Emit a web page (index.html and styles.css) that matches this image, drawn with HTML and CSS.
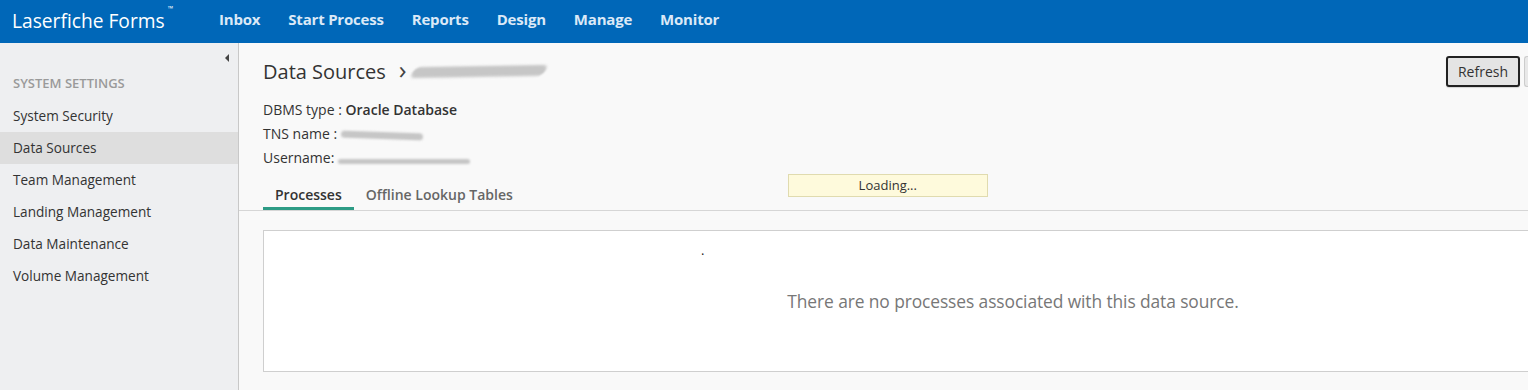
FILE: index.html
```html
<!DOCTYPE html>
<html>
<head>
<meta charset="utf-8">
<link rel="stylesheet" href="styles.css">
</head>
<body>
<header class="topbar">
  <div class="brand">Laserfiche Forms<sup class="tm">™</sup></div>
  <nav class="nav">
    <a>Inbox</a>
    <a>Start Process</a>
    <a>Reports</a>
    <a>Design</a>
    <a>Manage</a>
    <a>Monitor</a>
  </nav>
</header>
<div class="layout">
  <aside class="sidebar">
    <div class="collapse"><span class="tri"></span></div>
    <div class="side-head">SYSTEM SETTINGS</div>
    <ul class="side-list">
      <li>System Security</li>
      <li class="active">Data Sources</li>
      <li>Team Management</li>
      <li>Landing Management</li>
      <li>Data Maintenance</li>
      <li>Volume Management</li>
    </ul>
  </aside>
  <main class="main">
    <div class="head-row">
      <h1 class="title">Data Sources <span class="chev">›</span><span class="redact r-title"></span></h1>
      <div class="btns">
        <button class="btn">Refresh</button>
        <span class="btn-edge"></span>
      </div>
    </div>
    <div class="info">
      <div>DBMS type : <b>Oracle Database</b></div>
      <div>TNS name : <span class="redact r-tns"></span></div>
      <div>Username: <span class="redact r-user"></span></div>
    </div>
    <div class="tabs-row">
      <div class="tabs">
        <span class="tab active">Processes</span>
        <span class="tab">Offline Lookup Tables</span>
      </div>
      <div class="loading">Loading...</div>
    </div>
    <div class="panel">
      <span class="dot">.</span>
      <p class="empty">There are no processes associated with this data source.</p>
    </div>
  </main>
</div>
</body>
</html>
```

FILE: styles.css
```css
* { box-sizing: border-box; }
html, body { margin: 0; padding: 0; }
body {
  font-family: "Open Sans", "Noto Sans", sans-serif;
  color: #333;
  width: 1528px;
  height: 390px;
  overflow: hidden;
  background: #f9f9f9;
}
.topbar {
  height: 43px;
  background: #0067b8;
  display: flex;
  align-items: center;
}
.brand {
  color: #fff;
  font-size: 19.2px;
  padding-left: 12px;
  width: 219px;
  margin-top: -3px;
}
.tm { font-size: 7px; vertical-align: top; position: relative; top: -3px; margin-left: 3px; }
.nav { display: flex; gap: 28px; margin-top: -5px; }
.nav a {
  color: #dbe9f7;
  font-weight: 700;
  font-size: 15px;
  letter-spacing: -0.2px;
}
.layout { display: flex; height: 347px; }
.sidebar {
  width: 239px;
  flex: none;
  background: #eeeff1;
  border-right: 1px solid #c8c8c8;
  padding-top: 10px;
}
.collapse { display: flex; justify-content: flex-end; padding-right: 9px; height: 10px; }
.tri {
  width: 0; height: 0;
  border-top: 4px solid transparent;
  border-bottom: 4px solid transparent;
  border-right: 4px solid #444;
  margin-top: 1px;
}
.side-head {
  color: #9a9a9a;
  font-size: 13px;
  font-weight: 600;
  padding: 11px 13px 0;
  height: 37px;
  line-height: 18px;
}
.side-list { list-style: none; margin: 0; padding: 0; }
.side-list li {
  height: 32px;
  line-height: 32px;
  font-size: 13.6px;
  padding-left: 13px;
  color: #333;
}
.side-list li.active { background: #dedede; }
.main { flex: 1; min-width: 0; padding-top: 12px; }
.head-row {
  display: flex;
  justify-content: space-between;
  align-items: flex-start;
  padding-left: 24px;
}
.title {
  margin: 2px 0 0;
  font-size: 20px;
  font-weight: 400;
  color: #333;
  display: flex;
  align-items: center;
  height: 28px;
}
.chev { font-size: 26px; margin-left: 13px; margin-top: -4px; color: #444; }
.redact {
  display: inline-block;
  background: #c6c6c6;
  border-radius: 6px;
  filter: blur(1.2px);
  vertical-align: middle;
}
.r-title { width: 132px; height: 11px; margin-left: 6px; transform: skewX(-30deg) rotate(-1deg); }
.r-tns { width: 82px; height: 7px; transform: rotate(2deg); }
.r-user { width: 132px; height: 5px; margin-top: 4px; }
.btns { display: flex; align-items: flex-start; }
.btn {
  width: 74px;
  height: 31px;
  margin-top: 1px;
  font-family: "Open Sans", sans-serif;
  font-size: 14px;
  color: #333;
  background: #e4e4e4;
  border: 2px solid #222;
  border-radius: 3px;
  box-shadow: 0 1px 1px rgba(0,0,0,0.15);
  padding: 0;
}
.btn-edge {
  display: block;
  width: 4px;
  height: 31px;
  margin-left: 4px;
  margin-top: 1px;
  background: #e8e8e8;
  border: 1px solid #ccc;
  border-right: none;
  border-radius: 3px 0 0 3px;
}
.info {
  padding-left: 24px;
  margin-top: 11px;
  font-size: 14px;
  line-height: 24px;
}
.info b { font-weight: 600; }
.tabs-row {
  display: flex;
  align-items: flex-end;
  border-bottom: 1px solid #d6d6d6;
  padding-left: 24px;
  margin-top: 4px;
  height: 37px;
}
.tabs { display: flex; }
.tab {
  font-size: 14px;
  font-weight: 600;
  color: #666;
  padding: 0 12px 2px;
  border-bottom: 3px solid transparent;
  line-height: 20px;
}
.tab.active { color: #333; border-bottom-color: #2d9b85; }
.loading {
  align-self: flex-start;
  margin-left: 263px;
  width: 200px;
  height: 23px;
  background: #fefadc;
  border: 1px solid #e0dbaf;
  text-align: center;
  font-size: 13px;
  line-height: 20px;
  color: #333;
}
.panel {
  margin: 19px 0 0 24px;
  width: 1500px;
  height: 142px;
  background: #fff;
  border: 1px solid #cfcfcf;
  position: relative;
}
.dot { position: absolute; left: 437px; top: 10px; font-size: 13px; color: #222; }
.empty {
  margin: 0;
  padding-top: 58px;
  text-align: center;
  font-size: 17.4px;
  color: #777;
  letter-spacing: -0.1px;
}
```
